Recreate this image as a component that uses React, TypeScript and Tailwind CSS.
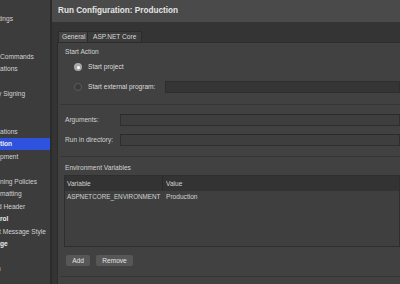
import React from "react";

type Row = { t: string; ml?: number; bold?: boolean; sel?: boolean };

const rows: Row[] = [
  { t: "tings", ml: -1 },
  { t: "" },
  { t: "" },
  { t: "Commands" },
  { t: "ations" },
  { t: "" },
  { t: "y Signing", ml: -2 },
  { t: "" },
  { t: "" },
  { t: "ations" },
  { t: "tion", bold: true, sel: true },
  { t: "pment" },
  { t: "" },
  { t: "ning Policies" },
  { t: "matting", ml: 0 },
  { t: "d Header", ml: -2 },
  { t: "rol", bold: true },
  { t: "t Message Style", ml: -1 },
  { t: "ge", bold: true },
  { t: "" },
  { t: "n", ml: -3 },
];

function Radio({ on }: { on: boolean }) {
  return on ? (
    <div className="flex h-[8px] w-[8px] shrink-0 items-center justify-center rounded-full bg-[#a9a9a9]">
      <div className="h-[3px] w-[3px] rounded-full bg-white" />
    </div>
  ) : (
    <div className="h-[8px] w-[8px] shrink-0 rounded-full border border-[#5c5c5c] bg-[#3a3a3a]" />
  );
}

export default function App() {
  return (
    <div className="flex h-[284px] w-[400px] overflow-hidden bg-[#353535] font-['Liberation_Sans',sans-serif] text-[6.6px] leading-[8px] text-[#d2d2d2]">
      {/* sidebar */}
      <div className="w-[50px] shrink-0 overflow-hidden bg-[#3c3c3c] pt-[12.75px]">
        {rows.map((r, i) => (
          <div
            key={i}
            className={
              "flex h-[12.5px] items-center whitespace-nowrap " +
              (r.sel ? "bg-[#2f52de] text-white" : "")
            }
          >
            <span
              className={r.bold ? "font-bold text-[#ececec]" : ""}
              style={{ marginLeft: r.ml ?? 0 }}
            >
              {r.t}
            </span>
          </div>
        ))}
      </div>
      <div className="w-[2px] shrink-0 bg-[#2b2b2b]" />
      {/* main */}
      <div className="flex min-w-0 flex-1 flex-col">
        <div className="flex h-[22px] shrink-0 items-center bg-[#4a4a4a] pl-[6px] text-[8.2px] font-bold text-[#e4e4e4]">
          Run Configuration: Production
        </div>
        <div className="flex min-h-0 flex-1 flex-col bg-[#343434]">
          {/* tabs */}
          <div className="flex h-[20px] shrink-0 items-end pl-[6px]">
            <div className="flex h-[11px] w-[30px] items-center border-l border-r border-t border-[#2c2c2c] bg-[#444444] pl-[3px] text-[#d8d8d8]">
              General
            </div>
            <div className="flex h-[11px] w-[54px] items-center border-r border-t border-[#2c2c2c] bg-[#3b3b3b] pl-[5px] text-[#d8d8d8]">
              ASP.NET Core
            </div>
          </div>
          {/* content box */}
          <div className="ml-[5px] flex flex-1 flex-col border-l border-t border-[#2c2c2c] bg-[#414141] pl-[7px]">
            <div className="mt-[5px] h-[8px]">Start Action</div>
            <div className="mt-[7px] flex h-[8px] items-center">
              <div className="ml-[9px]">
                <Radio on />
              </div>
              <span className="ml-[6px] text-[#dcdcdc]">Start project</span>
            </div>
            <div className="mt-[10px] flex h-[12px] items-center">
              <div className="ml-[9px]">
                <Radio on={false} />
              </div>
              <span className="ml-[6px] w-[77px] shrink-0 whitespace-nowrap text-[#dcdcdc]">
                Start external program:
              </span>
              <div className="h-[12px] flex-1 border border-[#2e2e2e] bg-[#353535]" />
            </div>
            <div className="-ml-[5px] mt-[11px] h-px bg-[#363636]" />
            <div className="mt-[9px] flex h-[12px] items-center">
              <span className="w-[55px] shrink-0">Arguments:</span>
              <div className="h-[12px] flex-1 border border-[#2e2e2e] border-t-[#2a2a2a] bg-[#3e3e3e]" />
            </div>
            <div className="mt-[8px] flex h-[12px] items-center">
              <span className="w-[55px] shrink-0 whitespace-nowrap">Run in directory:</span>
              <div className="h-[12px] flex-1 border border-[#2e2e2e] border-t-[#2a2a2a] bg-[#3e3e3e]" />
            </div>
            <div className="-ml-[5px] mt-[10px] h-px bg-[#363636]" />
            <div className="mt-[7px] h-[8px]">Environment Variables</div>
            <div className="-ml-[1px] mt-[3px] flex flex-col border border-[#2e2e2e]">
              <div className="flex h-[15px] items-center bg-[#333333]">
                <div className="flex h-full w-[98px] shrink-0 items-center border-r border-[#2a2a2a] pl-[2px]">
                  Variable
                </div>
                <div className="pl-[3px]">Value</div>
              </div>
              <div className="flex h-[55px] items-start bg-[#3f3f3f] pt-[2px]">
                <div className="w-[98px] shrink-0 overflow-hidden whitespace-nowrap pl-[2px] text-[6.3px]">
                  ASPNETCORE_ENVIRONMENT
                </div>
                <div className="pl-[3px]">Production</div>
              </div>
            </div>
            <div className="mt-[8px] flex h-[11px] items-center gap-[6px] pl-[1px]">
              <div className="flex h-[11px] w-[24px] items-center justify-center rounded-[2px] bg-[#575757] text-[#e4e4e4]">
                Add
              </div>
              <div className="flex h-[11px] w-[37px] items-center justify-center rounded-[2px] bg-[#575757] text-[#e4e4e4]">
                Remove
              </div>
            </div>
            <div className="-ml-[5px] mt-[10px] h-px bg-[#363636]" />
          </div>
        </div>
      </div>
    </div>
  );
}
